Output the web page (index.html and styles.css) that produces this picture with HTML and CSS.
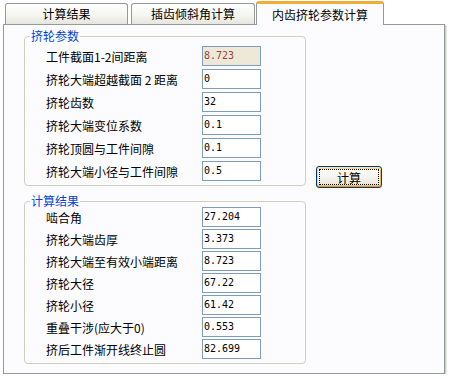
FILE: index.html
```html
<!DOCTYPE html>
<html lang="zh-CN">
<head>
  <meta charset="UTF-8">
  <meta name="viewport" content="width=device-width, initial-scale=1.0">
  <title>内齿挤轮参数计算</title>
  <link rel="stylesheet" href="styles.css">
</head>
<body>

  <div class="window">
    <div class="tabs">
      <div class="tab">计算结果</div>
      <div class="tab">插齿倾斜角计算</div>
      <div class="tab active">内齿挤轮参数计算</div>
    </div>

    <div class="panel">
      <div class="top-row">
        <fieldset class="group params">
          <legend>挤轮参数</legend>
          <div class="row"><label>工件截面1-2间距离</label><input class="readonly" value="8.723" readonly></div>
          <div class="row"><label>挤轮大端超越截面 2 距离</label><input value="0"></div>
          <div class="row"><label>挤轮齿数</label><input value="32"></div>
          <div class="row"><label>挤轮大端变位系数</label><input value="0.1"></div>
          <div class="row"><label>挤轮顶圆与工件间隙</label><input value="0.1"></div>
          <div class="row"><label>挤轮大端小径与工件间隙</label><input value="0.5"></div>
        </fieldset>
        <button class="calc"><span>计算</span></button>
      </div>

      <fieldset class="group results">
        <legend>计算结果</legend>
        <div class="row"><label>啮合角</label><input value="27.204"></div>
        <div class="row"><label>挤轮大端齿厚</label><input value="3.373"></div>
        <div class="row"><label>挤轮大端至有效小端距离</label><input value="8.723"></div>
        <div class="row"><label>挤轮大径</label><input value="67.22"></div>
        <div class="row"><label>挤轮小径</label><input value="61.42"></div>
        <div class="row"><label>重叠干涉(应大于0)</label><input value="0.553"></div>
        <div class="row"><label>挤后工件渐开线终止圆</label><input value="82.699"></div>
      </fieldset>
    </div>
  </div>

</body>
</html>
```

FILE: styles.css
```css
* {
  margin: 0;
  padding: 0;
  box-sizing: border-box;
}

body {
  background: #fff;
  font-family: "Noto Sans CJK SC", sans-serif;
  font-size: 12px;
  color: #000;
}

.window {
  margin-left: 3px;
  width: 442px;
}

/* tab strip */
.tabs {
  display: flex;
  align-items: flex-end;
  height: 24px;
  padding-left: 2px;
}

.tab {
  width: 123px;
  height: 21px;
  border: 1px solid #919b9c;
  border-bottom: none;
  border-radius: 3px 3px 0 0;
  background: linear-gradient(#fff, #f4f4f0 60%, #e6e5de);
  display: flex;
  align-items: center;
  justify-content: center;
  line-height: 12px;
}

.tab + .tab {
  margin-left: 3px;
  width: 124px;
}

.tab.active {
  position: relative;
  margin-left: 1px;
  margin-bottom: -1px;
  width: 128px;
  height: 24px;
  border-top: 3px solid #f2ac3a;
  background: #fcfcfe;
}

/* tab page */
.panel {
  height: 350px;
  border: 1px solid #919b9c;
  background: #fcfcfe;
  box-shadow: 1px 1px 0 #d0cec3, 2px 2px 0 #e8e6de;
  padding: 5px 0 0 20px;
}

.top-row {
  display: flex;
}

.group {
  width: 282px;
  border: 1px solid #d0d0bf;
  border-radius: 4px;
  padding: 4px 0 4px 5px;
}

.group legend {
  color: #0046d5;
  line-height: 12px;
  padding: 0 1px;
}

.results {
  margin-top: 9px;
  padding-top: 0;
}

.row {
  display: flex;
  align-items: center;
  height: 20px;
  padding-left: 16px;
}

.params .row + .row {
  margin-top: 3px;
}

.results .row + .row {
  margin-top: 2px;
}

.row label {
  width: 156px;
  white-space: nowrap;
}

.row input {
  width: 59px;
  height: 20px;
  border: 1px solid #7f9db9;
  padding: 0 1px 2px;
  background: #fff;
  font-family: "DejaVu Sans Mono", monospace;
  font-size: 10px;
  color: #000;
  outline: none;
}

.row input.readonly {
  background: #ece9d8;
  color: #9c3f3f;
}

/* default push button */
.calc {
  align-self: flex-end;
  width: 66px;
  height: 22px;
  margin-left: 10px;
  margin-bottom: -2px;
  padding: 2px;
  border: 1px solid #003c74;
  border-radius: 3px;
  background: linear-gradient(#fffdf6, #f5f4ef 50%, #e4e1d4);
  box-shadow: inset 0 1px 0 #ffe7a2, inset 0 2px 0 #fcd58a,
    inset 0 -1px 0 #e5972f, inset 0 -2px 0 #f6c35d,
    inset 1px 0 0 #fbd680, inset -1px 0 0 #f0b64f;
  font-family: "Noto Sans CJK SC", sans-serif;
  font-size: 12px;
  color: #000;
}

.calc span {
  display: flex;
  align-items: center;
  justify-content: center;
  height: 100%;
  border: 1px dotted #000;
}
```
